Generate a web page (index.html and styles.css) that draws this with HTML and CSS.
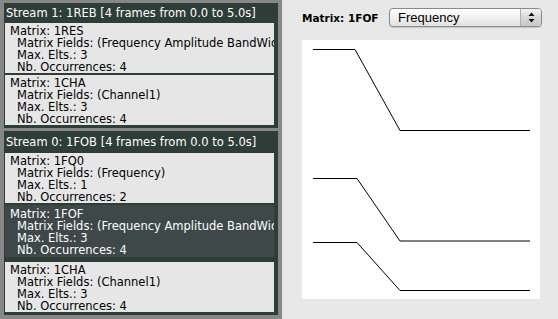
FILE: index.html
```html
<!DOCTYPE html>
<html lang="en">
<head>
    <meta charset="UTF-8">
    <title>Matrix viewer</title>
    <link rel="stylesheet" href="styles.css">
</head>
<body>
    <div class="app">
        <div class="streams">
            <section class="stream">
                <div class="stream-title">Stream 1: 1REB [4 frames from 0.0 to 5.0s]</div>
                <div class="matrix">
                    <div>Matrix: 1RES</div>
                    <div class="field">Matrix Fields: (Frequency Amplitude BandWidth</div>
                    <div class="field">Max. Elts.: 3</div>
                    <div class="field">Nb. Occurrences: 4</div>
                </div>
                <div class="matrix">
                    <div>Matrix: 1CHA</div>
                    <div class="field">Matrix Fields: (Channel1)</div>
                    <div class="field">Max. Elts.: 3</div>
                    <div class="field">Nb. Occurrences: 4</div>
                </div>
            </section>
            <section class="stream">
                <div class="stream-title tall">Stream 0: 1FOB [4 frames from 0.0 to 5.0s]</div>
                <div class="matrix">
                    <div>Matrix: 1FQ0</div>
                    <div class="field">Matrix Fields: (Frequency)</div>
                    <div class="field">Max. Elts.: 1</div>
                    <div class="field">Nb. Occurrences: 2</div>
                </div>
                <div class="matrix selected">
                    <div>Matrix: 1FOF</div>
                    <div class="field">Matrix Fields: (Frequency Amplitude BandWidth</div>
                    <div class="field">Max. Elts.: 3</div>
                    <div class="field">Nb. Occurrences: 4</div>
                </div>
                <div class="matrix">
                    <div>Matrix: 1CHA</div>
                    <div class="field">Matrix Fields: (Channel1)</div>
                    <div class="field">Max. Elts.: 3</div>
                    <div class="field">Nb. Occurrences: 4</div>
                </div>
            </section>
        </div>

        <div class="viewer">
            <div class="toolbar">
                <span class="label">Matrix: 1FOF</span>
                <div class="select">
                    <span class="select-text">Frequency</span>
                    <span class="select-arrows">
                        <svg width="7" height="11" viewBox="0 0 7 11">
                            <path d="M3.5 0.5 L6.5 4 L0.5 4 Z" fill="#111"/>
                            <path d="M0.5 7 L6.5 7 L3.5 10.5 Z" fill="#111"/>
                        </svg>
                    </span>
                </div>
            </div>
            <div class="plot">
                <svg width="238" height="259" viewBox="0 0 238 259">
                    <polyline points="11,9.5 53,9.5 98,90.5 228,90.5" fill="none" stroke="#000" stroke-width="1"/>
                    <polyline points="11,138.5 55,138.5 98,201 228,201" fill="none" stroke="#000" stroke-width="1"/>
                    <polyline points="11,202.5 55,202.5 98,250.5 228,250.5" fill="none" stroke="#000" stroke-width="1"/>
                </svg>
            </div>
        </div>
    </div>
</body>
</html>
```

FILE: styles.css
```css
body {
    margin: 0;
    font-family: "DejaVu Sans", Verdana, sans-serif;
    font-size: 11.5px;
}
.app {
    display: flex;
    width: 558px;
    height: 319px;
    overflow: hidden;
}
.streams {
    width: 274px;
    flex-shrink: 0;
    background: #878787;
    padding: 3px 4px 0 4px;
    display: flex;
    flex-direction: column;
    gap: 3px;
}
.stream {
    background: #2f3d39;
    padding: 0 4px 3px 1px;
    display: flex;
    flex-direction: column;
    gap: 2px;
}
.stream-title {
    height: 20px;
    line-height: 20px;
    padding-left: 1px;
    color: #fff;
    white-space: nowrap;
    margin-bottom: -2px;
}
.stream-title.tall {
    height: 22px;
    line-height: 22px;
}
.matrix {
    height: 50px;
    padding: 2px 0 0 5px;
    box-sizing: border-box;
    background: #e6e6e6;
    color: #000;
    line-height: 12px;
    white-space: nowrap;
    overflow: hidden;
}
.matrix.selected {
    background: #3e4848;
    color: #fff;
    height: 52px;
    padding-top: 3px;
    margin-bottom: 3px;
}
.field {
    padding-left: 7px;
}
.viewer {
    flex: 1;
    background: #e8e8e8;
    padding: 8px 18px 0 20px;
}
.toolbar {
    display: flex;
    align-items: center;
    height: 19px;
}
.label {
    font-weight: bold;
    font-size: 10.5px;
    width: 87px;
}
.select {
    width: 153px;
    height: 19px;
    box-sizing: border-box;
    border: 1px solid #8a8a8a;
    border-radius: 4px;
    background: linear-gradient(#ffffff, #f0f0f0 50%, #e2e2e2);
    display: flex;
    overflow: hidden;
    box-shadow: 0 1px 1px rgba(0, 0, 0, 0.15);
}
.select-text {
    flex: 1;
    padding-left: 8px;
    font-family: "Liberation Sans", Arial, sans-serif;
    font-size: 13px;
    line-height: 17px;
}
.select-arrows {
    width: 20px;
    border-left: 1px solid #b0b0b0;
    background: linear-gradient(#f4f4f4, #d8d8d8 50%, #c8c8c8);
    display: flex;
    align-items: center;
    justify-content: center;
}
.plot {
    margin-top: 13px;
    width: 238px;
    height: 259px;
    background: #fff;
}
.plot svg {
    display: block;
}
```
